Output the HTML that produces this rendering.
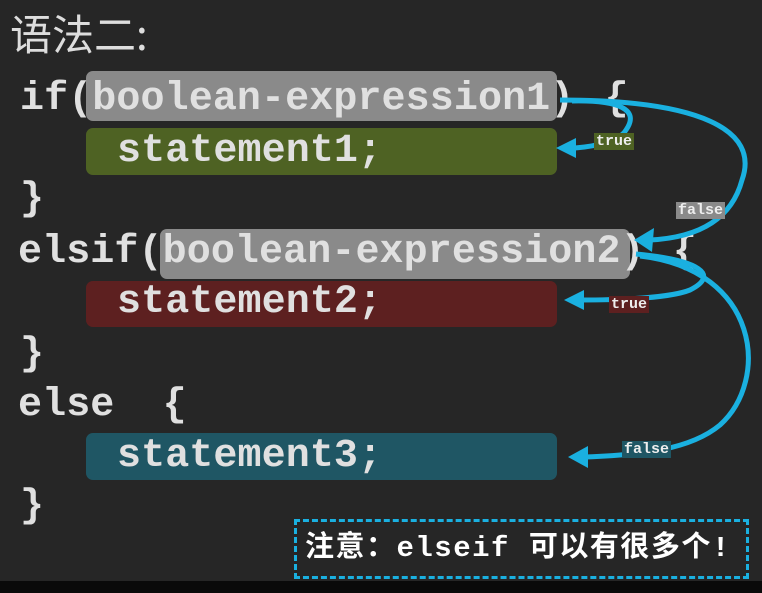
<html><head><style>
body{margin:0;width:762px;height:593px;background:#262626;position:relative;overflow:hidden;font-family:"Liberation Mono",monospace;font-weight:bold;color:#ddd}
.b{position:absolute;border-radius:7px}
.t{position:absolute;font-size:40px;letter-spacing:0.1px;line-height:40px;white-space:pre;color:#e0e0e0}
.l{position:absolute;font-size:15px;line-height:17px;padding:0 2px;color:#eee}
</style></head><body>
<div style="position:absolute;left:10px;top:8px;font:42px 'Noto Sans CJK SC',sans-serif;color:#ddd;line-height:50px">语法二:</div>
<div class="b" style="left:86px;top:71px;width:471px;height:50px;background:#8a8a8a"></div>
<div class="b" style="left:86px;top:128px;width:471px;height:47px;background:#4e6223"></div>
<div class="b" style="left:160px;top:229px;width:470px;height:50px;background:#8a8a8a"></div>
<div class="b" style="left:86px;top:281px;width:471px;height:46px;background:#5d2020"></div>
<div class="b" style="left:86px;top:433px;width:471px;height:47px;background:#1f5664"></div>
<div class="t" style="left:20px;top:80px">if(boolean-expression1) <span style="margin-left:6px">{</span></div>
<div class="t" style="left:117px;top:132px">statement1;</div>
<div class="t" style="left:20px;top:180px">}</div>
<div class="t" style="left:18px;top:233px">elsif(boolean-expression2) <span style="margin-left:4px">{</span></div>
<div class="t" style="left:117px;top:283px">statement2;</div>
<div class="t" style="left:20px;top:335px">}</div>
<div class="t" style="left:18px;top:386px">else  {</div>
<div class="t" style="left:117px;top:437px">statement3;</div>
<div class="t" style="left:20px;top:487px">}</div>
<svg width="762" height="593" style="position:absolute;left:0;top:0" fill="none" stroke="#1ab0e0" stroke-width="5">
<path d="M560 100 C700 100 760 130 742 180 C730 225 690 238 650 240"/>
<path d="M572 101 C620 100 640 110 626 130 C620 140 600 146 575 148"/>
<path d="M636 254 C700 260 720 275 690 290 C670 298 620 300 580 300"/>
<path d="M640 256 C760 270 770 380 720 425 C690 450 640 455 585 457"/>
<g fill="#1ab0e0" stroke="none">
<path d="M634 240 L654 228 L652 252Z"/>
<path d="M556 148 L576 138 L576 158Z"/>
<path d="M564 300 L584 290 L584 310Z"/>
<path d="M568 457 L588 446 L588 468Z"/>
</g></svg>
<div class="l" style="left:594px;top:133px;background:#4e6223">true</div>
<div class="l" style="left:676px;top:202px;background:#8a8a8a">false</div>
<div class="l" style="left:609px;top:296px;background:#5d2020">true</div>
<div class="l" style="left:622px;top:441px;background:#1f5664">false</div>
<div style="position:absolute;left:294px;top:519px;height:54px;border:3px dashed #1ab0e0;color:#fff;font:bold 29px 'Liberation Mono','Noto Sans CJK SC',sans-serif;letter-spacing:1.5px;line-height:54px;padding-left:8px;width:441px;white-space:nowrap">注意：elseif 可以有很多个!</div>
<div style="position:absolute;left:0;top:581px;width:762px;height:12px;background:#0a0a0a"></div>
</body></html>
